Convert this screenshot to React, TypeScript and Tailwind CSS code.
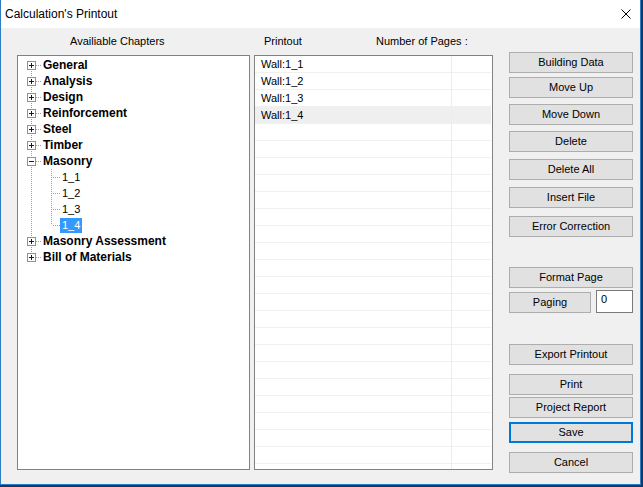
import React from "react";

const ui = "font-['Liberation_Sans',Arial,sans-serif]";

const topItems = [
  "General",
  "Analysis",
  "Design",
  "Reinforcement",
  "Steel",
  "Timber",
  "Masonry",
];
const children = ["1_1", "1_2", "1_3", "1_4"];
const afterItems = ["Masonry Assessment", "Bill of Materials"];

const printout = ["Wall:1_1", "Wall:1_2", "Wall:1_3", "Wall:1_4"];

function TopGutter({ first, last, expanded }: { first?: boolean; last?: boolean; expanded?: boolean }) {
  return (
    <svg width="25" height="16" className="shrink-0" shapeRendering="crispEdges">
      <line x1="13.5" y1={first ? 8 : 0} x2="13.5" y2={last ? 8 : 16} stroke="#a0a0a0" strokeDasharray="1 1" />
      <line x1="18" y1="8.5" x2="24" y2="8.5" stroke="#a0a0a0" strokeDasharray="1 1" />
      <rect x="9.5" y="4.5" width="8" height="8" fill="#fff" stroke="#919191" />
      <line x1="11" y1="8.5" x2="16" y2="8.5" stroke="#1a1a1a" />
      {!expanded && <line x1="13.5" y1="6" x2="13.5" y2="11" stroke="#1a1a1a" />}
    </svg>
  );
}

function ChildGutter({ last }: { last?: boolean }) {
  return (
    <svg width="42" height="16" className="shrink-0" shapeRendering="crispEdges">
      <line x1="13.5" y1="0" x2="13.5" y2="16" stroke="#a0a0a0" strokeDasharray="1 1" />
      <line x1="33.5" y1="0" x2="33.5" y2={last ? 8 : 16} stroke="#a0a0a0" strokeDasharray="1 1" />
      <line x1="35" y1="8.5" x2="42" y2="8.5" stroke="#a0a0a0" strokeDasharray="1 1" />
    </svg>
  );
}

function Btn({ label, className = "" }: { label: string; className?: string }) {
  return (
    <button className={`h-[21px] w-full border border-[#adadad] bg-[#e1e1e1] text-[11px] leading-none text-black ${className}`}>
      {label}
    </button>
  );
}

export default function App() {
  return (
    <div className={`h-[487px] w-[643px] bg-[#173a60] ${ui}`}>
      <div className="flex h-[485px] w-[641px] flex-col border-x border-b border-[#2f7cc4] bg-[#f0f0f0]">
        {/* title bar */}
        <div className="flex h-[28px] items-center justify-between bg-white pl-[4px] pr-[9px]">
          <span className="text-[12px] text-black">Calculation's Printout</span>
          <svg width="10" height="10" viewBox="0 0 10 10">
            <path d="M0.5 0.5 L9.5 9.5 M9.5 0.5 L0.5 9.5" stroke="#000" strokeWidth="1" />
          </svg>
        </div>

        <div className="flex pl-[16px]">
          {/* chapters */}
          <div className="flex w-[233px] flex-col">
            <div className="flex h-[27px] items-center pl-[53px] text-[11px] text-black">Availiable Chapters</div>
            <div className="h-[415px] border border-[#828282] bg-white pt-[1px]">
              {topItems.map((t, i) => (
                <div key={t} className="flex h-[16px] items-center">
                  <TopGutter first={i === 0} expanded={t === "Masonry"} />
                  <span className="text-[12px] font-bold leading-[16px] text-black">{t}</span>
                </div>
              ))}
              {children.map((c, i) => {
                const sel = i === children.length - 1;
                return (
                  <div key={c} className="flex h-[16px] items-center">
                    <ChildGutter last={sel} />
                    <span
                      className={`px-[2px] text-[11px] leading-[15px] ${sel ? "bg-[#3399ff] text-white" : "text-black"}`}
                    >
                      {c}
                    </span>
                  </div>
                );
              })}
              {afterItems.map((t, i) => (
                <div key={t} className="flex h-[16px] items-center">
                  <TopGutter last={i === afterItems.length - 1} />
                  <span className="text-[12px] font-bold leading-[16px] text-black">{t}</span>
                </div>
              ))}
            </div>
          </div>

          {/* printout list */}
          <div className="ml-[4px] flex w-[239px] flex-col">
            <div className="flex h-[27px] items-center pl-[10px] text-[11px] text-black">
              <span className="w-[112px]">Printout</span>
              <span>Number of Pages :</span>
            </div>
            <div className="flex h-[415px] border border-[#828282] bg-white">
              <div className="w-[197px] border-r border-[#ececec]">
                {Array.from({ length: 24 }).map((_, i) => (
                  <div
                    key={i}
                    className={`flex h-[17px] items-center border-b border-[#f0f0f0] pl-[6px] text-[11px] text-black ${i === 3 ? "bg-[#efefef]" : ""}`}
                  >
                    {printout[i] ?? ""}
                  </div>
                ))}
              </div>
              <div className="flex-1 pr-[1px]">
                {Array.from({ length: 24 }).map((_, i) => (
                  <div
                    key={i}
                    className={`h-[17px] border-b border-[#f0f0f0] ${i === 3 ? "bg-[#efefef]" : ""}`}
                  />
                ))}
              </div>
            </div>
          </div>

          {/* buttons */}
          <div className="ml-[16px] flex w-[124px] flex-col pt-[24px]">
            <Btn label="Building Data" />
            <Btn label="Move Up" className="mt-[4px]" />
            <Btn label="Move Down" className="mt-[6px]" />
            <Btn label="Delete" className="mt-[6px]" />
            <Btn label="Delete All" className="mt-[7px]" />
            <Btn label="Insert File" className="mt-[7px]" />
            <Btn label="Error Correction" className="mt-[8px]" />
            <Btn label="Format Page" className="mt-[30px]" />
            <div className="mt-[2px] flex items-end">
              <button className="h-[21px] w-[82px] border border-[#adadad] bg-[#e1e1e1] text-[11px] leading-none text-black">
                Paging
              </button>
              <div className="ml-[5px] h-[23px] w-[37px] border border-[#7a7a7a] bg-white pl-[4px] pt-[3px] text-[11px] leading-none text-black">
                0
              </div>
            </div>
            <Btn label="Export Printout" className="mt-[31px]" />
            <Btn label="Print" className="mt-[9px]" />
            <Btn label="Project Report" className="mt-[2px]" />
            <button className="mt-[4px] h-[21px] w-full border-2 border-[#0078d7] bg-[#e1e1e1] text-[11px] leading-none text-black">
              Save
            </button>
            <Btn label="Cancel" className="mt-[9px]" />
          </div>
        </div>
      </div>
    </div>
  );
}
